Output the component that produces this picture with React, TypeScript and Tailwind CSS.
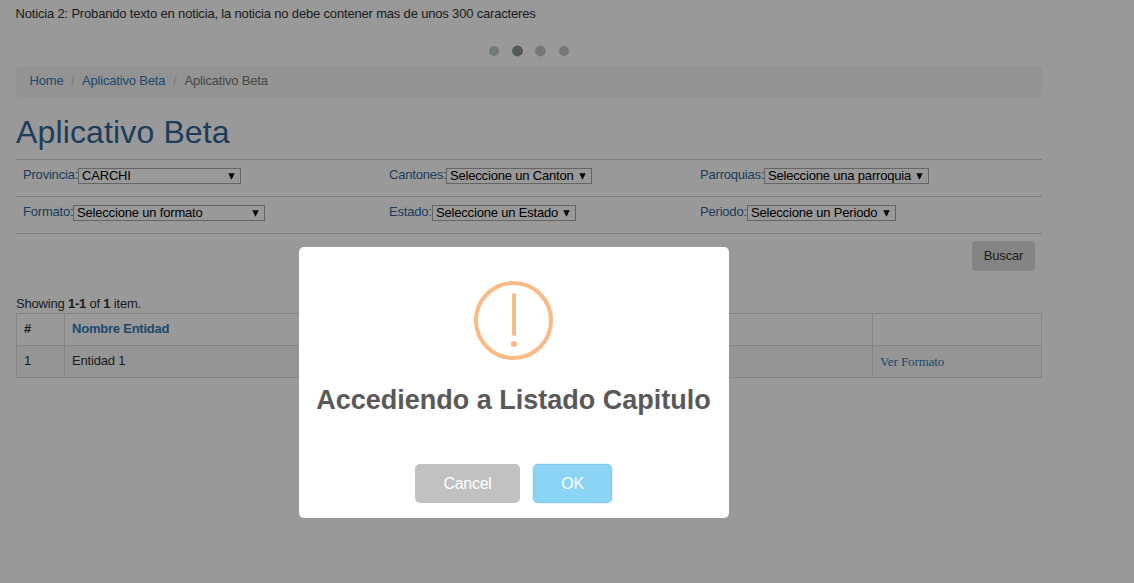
import type { ReactNode } from "react";

function Select({ value, className }: { value: string; className: string }) {
  return (
    <button
      type="button"
      className={`flex h-4 items-center justify-between whitespace-nowrap border border-[#a9a9a9] bg-white pl-[3px] pr-[5px] text-left text-[13px] leading-[14px] tracking-[-0.18px] text-black ${className}`}
    >
      <span>{value}</span>
      <svg className="h-[7px] w-[7px] shrink-0" viewBox="0 0 7 7" fill="currentColor">
        <path d="M0.3 0.3h6.4L3.5 6.8z" />
      </svg>
    </button>
  );
}

function Field({ label, labelClass, children }: { label: string; labelClass: string; children: ReactNode }) {
  return (
    <div className="flex pl-[7px] pt-2">
      <label className={`-mt-px h-4 shrink-0 whitespace-nowrap leading-4 tracking-[-0.2px] text-[#336699] ${labelClass}`}>{label}</label>
      {children}
    </div>
  );
}

function Page() {
  return (
    <main className="h-[583px] w-[1042px] pl-4">
      <p className="-ml-[0.5px] h-[45px] whitespace-nowrap pt-1 text-[13px] leading-5 tracking-[-0.175px]">
        Noticia 2: Probando texto en noticia, la noticia no debe contener mas de unos 300 caracteres
      </p>
      <svg className="ml-[473px] h-[21px] w-[81px]" viewBox="0 0 81 21">
        <circle cx="5" cy="6" r="5" fill="#c0cbc7" />
        <circle cx="28.5" cy="6" r="5.4" fill="#869791" />
        <circle cx="51.5" cy="6" r="5.4" fill="#c5c9c7" />
        <circle cx="75" cy="6" r="5" fill="#c5c9c7" />
      </svg>
      <nav className="flex h-[31px] items-center rounded bg-[#f5f5f5] pb-0.5 pl-[13.5px] text-[13px] tracking-[-0.18px] text-[#777]">
        <a className="w-[34px] text-[#337ab7]">Home</a>
        <span className="w-[18.5px] text-center text-[#ccc]">/</span>
        <a className="w-[83px] whitespace-nowrap text-[#337ab7]">Aplicativo Beta</a>
        <span className="w-[19.5px] text-center text-[#ccc]">/</span>
        <span className="whitespace-nowrap">Aplicativo Beta</span>
      </nav>
      <h1 className="h-[62px] pt-4 text-[32px] leading-[38px] tracking-[0.14px] text-[#336699]">Aplicativo Beta</h1>
      <section className="text-[13px]">
        <div className="grid h-[37px] grid-cols-[366px_311px_349px] border-t border-[#d6d6d6]">
          <Field label="Provincia:" labelClass="w-[55px]"><Select value="CARCHI" className="w-[163px]" /></Field>
          <Field label="Cantones:" labelClass="w-[57px]"><Select value="Seleccione un Canton" className="w-[146px]" /></Field>
          <Field label="Parroquias:" labelClass="w-[64px]"><Select value="Seleccione una parroquia" className="w-[165px]" /></Field>
        </div>
        <div className="grid h-[37px] grid-cols-[366px_311px_349px] border-t border-[#d6d6d6]">
          <Field label="Formato:" labelClass="w-[50px]"><Select value="Seleccione un formato" className="w-[192px]" /></Field>
          <Field label="Estado:" labelClass="w-[43px]"><Select value="Seleccione un Estado" className="w-[144px]" /></Field>
          <Field label="Periodo:" labelClass="w-[47px]"><Select value="Seleccione un Periodo" className="w-[149px]" /></Field>
        </div>
        <div className="flex h-[60px] justify-end border-t border-[#d6d6d6] pr-[7px] pt-[7px]">
          <button className="h-[30px] w-[63px] rounded bg-[#ddd] text-[13px] tracking-[-0.15px] text-[#333]">Buscar</button>
        </div>
      </section>
      <p className="h-5 pt-px text-[13px] leading-5 tracking-[-0.2px]">
        Showing <b>1-1</b> of <b>1</b> item.
      </p>
      <table className="w-full table-fixed border-collapse text-left text-[13px] tracking-[-0.18px]">
        <colgroup>
          <col className="w-12" />
          <col className="w-[808px]" />
          <col />
        </colgroup>
        <tbody>
          <tr className="h-8">
            <th className="border border-[#ddd] px-[7px] py-0 pb-0.5">#</th>
            <th className="border border-[#ddd] px-[7px] py-0 pb-0.5 tracking-[-0.22px] text-[#337ab7]">Nombre Entidad</th>
            <th className="border border-[#ddd]" />
          </tr>
          <tr className="h-8 bg-[#f9f9f9]">
            <td className="border border-[#ddd] px-[7px] py-0 pb-0.5">1</td>
            <td className="border border-[#ddd] px-[7px] py-0 pb-0.5">Entidad 1</td>
            <td className="border border-[#ddd] px-[7px] py-0 font-['Liberation_Serif',serif] tracking-[-0.1px] text-[#337ab7]">Ver Formato</td>
          </tr>
        </tbody>
      </table>
    </main>
  );
}

function Dialog() {
  return (
    <div className="fixed inset-0 bg-black/40 pl-[299px] pt-[247px]">
      <div role="dialog" className="flex h-[271px] w-[430px] flex-col items-center rounded-[5px] bg-white pr-px pt-[34px]">
        <svg className="h-[79px] w-[79px]" viewBox="0 0 79 79" fill="#f8bb86">
          <circle cx="39.5" cy="39.5" r="37.5" fill="none" stroke="#f8bb86" strokeWidth="4" />
          <rect x="38" y="12" width="4" height="43" rx="2" />
          <circle cx="40" cy="63" r="3" />
        </svg>
        <h2 className="mt-5 whitespace-nowrap text-[27px] font-bold leading-10 text-[#595959]">Accediendo a Listado Capitulo</h2>
        <div className="mt-[44px] flex gap-[13px]">
          <button className="h-[39px] w-[105px] rounded-[5px] bg-[#c1c1c1] text-[16px] tracking-[-0.3px] text-white">Cancel</button>
          <button className="h-[39px] w-[79px] rounded-[5px] bg-[#8cd4f5] text-[16px] tracking-[-0.3px] text-white shadow-[0_0_2px_rgba(140,212,245,0.8),inset_0_0_0_1px_rgba(0,0,0,0.05)]">
            OK
          </button>
        </div>
      </div>
    </div>
  );
}

export default function App() {
  return (
    <div className="h-[583px] w-full overflow-hidden bg-white font-['Liberation_Sans',Arial,sans-serif] text-[#333]">
      <Page />
      <Dialog />
    </div>
  );
}
